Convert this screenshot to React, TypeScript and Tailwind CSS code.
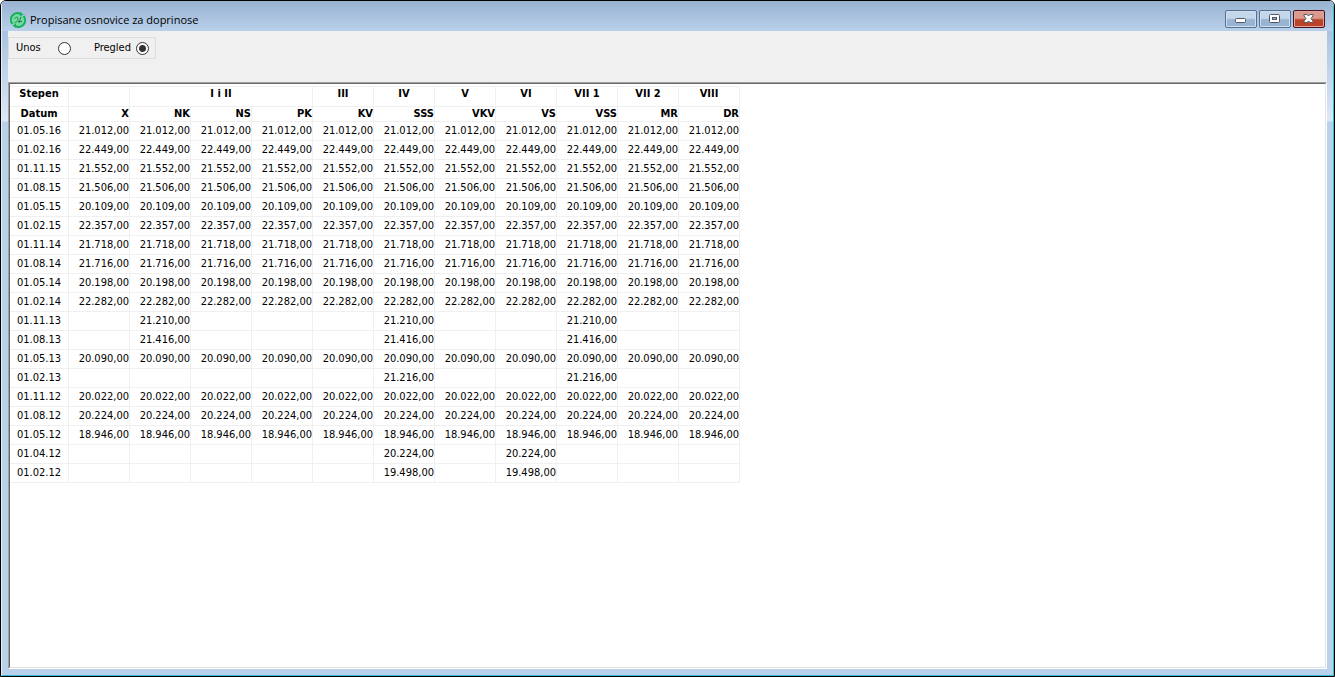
import React, { useState } from "react";

const columns = ["X", "NK", "NS", "PK", "KV", "SSS", "VKV", "VS", "VSS", "MR", "DR"];

const groups = [
  { label: "", span: 1 },
  { label: "I i II", span: 3 },
  { label: "III", span: 1 },
  { label: "IV", span: 1 },
  { label: "V", span: 1 },
  { label: "VI", span: 1 },
  { label: "VII 1", span: 1 },
  { label: "VII 2", span: 1 },
  { label: "VIII", span: 1 },
];

// rows without "only" have the same amount in every column
const rows: { date: string; amount: string; only?: string[] }[] = [
  { date: "01.05.16", amount: "21.012,00" },
  { date: "01.02.16", amount: "22.449,00" },
  { date: "01.11.15", amount: "21.552,00" },
  { date: "01.08.15", amount: "21.506,00" },
  { date: "01.05.15", amount: "20.109,00" },
  { date: "01.02.15", amount: "22.357,00" },
  { date: "01.11.14", amount: "21.718,00" },
  { date: "01.08.14", amount: "21.716,00" },
  { date: "01.05.14", amount: "20.198,00" },
  { date: "01.02.14", amount: "22.282,00" },
  { date: "01.11.13", amount: "21.210,00", only: ["NK", "SSS", "VSS"] },
  { date: "01.08.13", amount: "21.416,00", only: ["NK", "SSS", "VSS"] },
  { date: "01.05.13", amount: "20.090,00" },
  { date: "01.02.13", amount: "21.216,00", only: ["SSS", "VSS"] },
  { date: "01.11.12", amount: "20.022,00" },
  { date: "01.08.12", amount: "20.224,00" },
  { date: "01.05.12", amount: "18.946,00" },
  { date: "01.04.12", amount: "20.224,00", only: ["SSS", "VS"] },
  { date: "01.02.12", amount: "19.498,00", only: ["SSS", "VS"] },
];

function AppIcon() {
  return (
    <svg width="16" height="16" viewBox="0 0 16 16" fill="none" aria-hidden="true">
      <circle cx="8" cy="8" r="6" fill="#6fdca0" />
      <path d="M2.500 12A6.600 6.600 0 0 1 10.500 1.800" stroke="#12b155" strokeWidth="2" />
      <path d="M13.500 4A6.600 6.600 0 0 1 5.500 14.200" stroke="#12b155" strokeWidth="2" />
      <path d="M10 0l3.500 2.200-3.500 2.300zM6 16l-3.500-2.200L6 11.500z" fill="#12b155" />
      <path d="M4.500 7c1-2.500 3.500-2.500 3.500 0S6 10 4.500 11M9 11l2-6M8 9.500h4" stroke="#2f7d58" />
    </svg>
  );
}

function TitleBar() {
  const glass =
    "h-[18px] w-8 flex items-center justify-center rounded-[2px] border border-[#56708f] bg-linear-to-b from-[#c3d6ea] from-45% to-[#98b4d2] to-55% shadow-[inset_0_0_0_1px_#cfdfef]";
  return (
    <header className="flex h-[30px] shrink-0 items-start justify-between bg-linear-to-b from-[#98b2d0] to-[#b9d0ea] pl-2 pr-2">
      <div className="flex items-center gap-1 pt-[11px]">
        <AppIcon />
        <h1 className="font-['Open_Sans',sans-serif] text-[11px] leading-4 text-black">
          Propisane osnovice za doprinose
        </h1>
      </div>
      <div className="flex gap-[2px] pt-[9px]">
        <button aria-label="Minimize" className={glass}>
          <svg width="12" height="10" viewBox="0 0 12 10">
            <rect x=".5" y="4.500" width="10" height="4" rx="1" fill="#fff" stroke="#535666" />
          </svg>
        </button>
        <button aria-label="Maximize" className={glass}>
          <svg width="12" height="10" viewBox="0 0 12 10">
            <rect x=".5" y=".5" width="10" height="8" rx="1" fill="#fff" stroke="#535666" />
            <rect x="3.500" y="3.500" width="4" height="2" fill="#8fb0d2" stroke="#535666" />
          </svg>
        </button>
        <button
          aria-label="Close"
          className="flex h-[18px] w-8 items-center justify-center rounded-[2px] border border-[#4c1020] bg-linear-to-b from-[#dc9a8c] from-45% to-[#bc4229] to-55% shadow-[inset_0_0_0_1px_#e0a59a]"
        >
          <svg width="12" height="10" viewBox="0 0 12 10">
            <path
              d="M1 .5h3L5.500 2 7 .5h3v1.500L8 4.500l2 2.500v1.500H7L5.500 7 4 8.500H1V7l2-2.500L1 2z"
              fill="#fff"
              stroke="#535666"
            />
          </svg>
        </button>
      </div>
    </header>
  );
}

export default function App() {
  const [mode, setMode] = useState("pregled");
  const radio =
    "size-[13px] appearance-none rounded-full border border-[#333] bg-white checked:bg-[radial-gradient(circle,#333_0_3px,#fff_4px)]";

  return (
    <div className="flex h-screen flex-col overflow-hidden rounded-t-md border border-black bg-[#b9d1ea] font-['DejaVu_Sans_Condensed','DejaVu_Sans',sans-serif] text-[11px] text-black">
      <div className="flex min-h-0 flex-1 flex-col border-b border-l border-r border-b-[#33bcd6] border-l-[#e6eef8] border-r-[#33bcd6] bg-[linear-gradient(#a9c3e0_30px,#dce8f6_120px,#b9d1ea_121px)]">
        <TitleBar />
        <main className="mx-[6px] flex min-h-0 flex-1 flex-col bg-[#f0f0f0]">
          <div className="h-[51px] shrink-0 pt-[6px]">
            <div className="flex h-[22px] w-[148px] items-center justify-between border border-[#dcdcdc] pl-[7px] pr-[6px] leading-5">
              <label className="flex items-center gap-[17px]">
                Unos
                <input type="radio" name="mode" className={radio} checked={mode === "unos"} onChange={() => setMode("unos")} />
              </label>
              <label className="flex items-center gap-[5px]">
                Pregled
                <input type="radio" name="mode" className={radio} checked={mode === "pregled"} onChange={() => setMode("pregled")} />
              </label>
            </div>
          </div>

          {/* Sunken grid panel */}
          <div className="min-h-0 flex-1 border border-b-white border-l-[#a0a0a0] border-r-white border-t-[#a0a0a0]">
            <div className="h-full overflow-hidden border border-b-[#e3e3e3] border-l-[#696969] border-r-[#e3e3e3] border-t-[#696969] bg-white">
              <table className="mt-[2px] w-[730px] table-fixed border-separate border-spacing-0 border-t border-[#f0f0f0] leading-3 [&_td]:border-b [&_td]:border-r [&_td]:border-[#f0f0f0] [&_td]:p-0 [&_th]:border-b [&_th]:border-r [&_th]:border-[#f0f0f0] [&_th]:p-0">
                <colgroup>
                  <col className="w-[59px]" />
                  {columns.map((c) => (
                    <col key={c} className="w-[61px]" />
                  ))}
                </colgroup>
                <thead>
                  <tr className="h-5 align-top leading-[14px]">
                    <th>Stepen</th>
                    {groups.map((g, i) => (
                      <th key={i} colSpan={g.span}>
                        {g.label}
                      </th>
                    ))}
                  </tr>
                  <tr className="h-[15px]">
                    <th>Datum</th>
                    {columns.map((c) => (
                      <th key={c} className="text-right">
                        {c}
                      </th>
                    ))}
                  </tr>
                </thead>
                <tbody>
                  {rows.map((row) => (
                    <tr key={row.date} className="h-[19px]">
                      <td className="text-center">{row.date}</td>
                      {columns.map((c) => (
                        <td key={c} className="text-right">
                          {!row.only || row.only.includes(c) ? row.amount : ""}
                        </td>
                      ))}
                    </tr>
                  ))}
                </tbody>
              </table>
            </div>
          </div>
        </main>
        <footer className="h-[6px] shrink-0 bg-[#b9d1ea]" />
      </div>
    </div>
  );
}
